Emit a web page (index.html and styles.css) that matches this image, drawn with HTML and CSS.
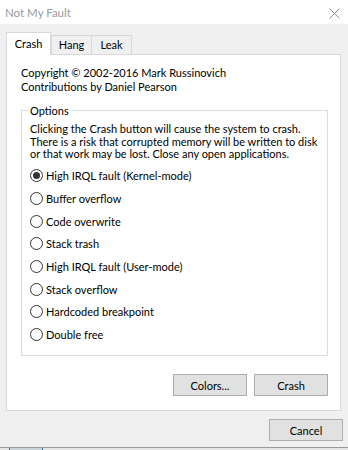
FILE: index.html
```html
<!DOCTYPE html>
<html lang="en">

<head>
    <meta charset="UTF-8">
    <title>Not My Fault</title>
    <link rel="stylesheet" href="styles.css">
</head>

<body>
    <div class="window">
        <div class="titlebar">
            <span class="title">Not My Fault</span>
            <svg class="close" width="11" height="11" viewBox="0 0 11 11">
                <path d="M0.5 0.5 L10.5 10.5 M10.5 0.5 L0.5 10.5" stroke="#8c8c8c" stroke-width="1" fill="none"/>
            </svg>
        </div>

        <div class="client">
            <div class="tabs">
                <div class="tab active">Crash</div>
                <div class="tab">Hang</div>
                <div class="tab">Leak</div>
            </div>

            <div class="panel">
                <p class="copy">Copyright © 2002-2016 Mark Russinovich<br>Contributions by Daniel Pearson</p>

                <fieldset class="options">
                    <legend>Options</legend>
                    <p class="desc">Clicking the Crash button will cause the system to crash.<br>There is a risk that corrupted memory will be written to disk<br>or that work may be lost. Close any open applications.</p>
                    <div class="radios">
                        <label class="radio"><span class="dot checked"></span>High IRQL fault (Kernel-mode)</label>
                        <label class="radio"><span class="dot"></span>Buffer overflow</label>
                        <label class="radio"><span class="dot"></span>Code overwrite</label>
                        <label class="radio"><span class="dot"></span>Stack trash</label>
                        <label class="radio"><span class="dot"></span>High IRQL fault (User-mode)</label>
                        <label class="radio"><span class="dot"></span>Stack overflow</label>
                        <label class="radio"><span class="dot"></span>Hardcoded breakpoint</label>
                        <label class="radio"><span class="dot"></span>Double free</label>
                    </div>
                </fieldset>

                <div class="actions">
                    <button>Colors...</button>
                    <button>Crash</button>
                </div>
            </div>

            <div class="footer">
                <button>Cancel</button>
            </div>
        </div>
    </div>

    <div class="desktop">
        <span class="taskitem"></span>
    </div>
</body>

</html>
```

FILE: styles.css
```css
body {
    margin: 0;
    width: 348px;
    height: 450px;
    overflow: hidden;
    font-family: "Lato", "Noto Sans", sans-serif;
    font-size: 11px;
    color: #000;
    background-color: #e4e4e4;
}

.window {
    height: 448px;
    display: flex;
    flex-direction: column;
    border-bottom: 1px solid #9a9a9a;
    box-sizing: border-box;
}

.titlebar {
    height: 24px;
    flex: none;
    background-color: #fff;
    display: flex;
    align-items: center;
    justify-content: space-between;
    padding: 0 8px 0 5px;
}

.title {
    color: #999;
    font-size: 11.5px;
}

.close {
    display: block;
    margin-top: 2px;
}

.client {
    flex: 1;
    background-color: #f0f0f0;
    padding: 9px 7px 0 6px;
    display: flex;
    flex-direction: column;
}

/* tab strip */
.tabs {
    display: flex;
    align-items: flex-end;
    height: 21px;
    flex: none;
    position: relative;
    z-index: 1;
}

.tab {
    height: 18px;
    line-height: 18px;
    width: 39px;
    text-align: center;
    border: 1px solid #d9d9d9;
    border-bottom: none;
    background-color: #f0f0f0;
}

.tab + .tab {
    margin-left: -1px;
}

.tab.active {
    width: 43px;
    height: 22px;
    line-height: 21px;
    margin-bottom: -1px;
    background-color: #fff;
}

.tab.active + .tab {
    margin-left: 0;
}

.panel {
    flex: none;
    box-sizing: border-box;
    height: 357px;
    background-color: #fff;
    border: 1px solid #d9d9d9;
    padding: 11px 12px 0 14px;
}

.copy {
    margin: 0;
    line-height: 14px;
    white-space: nowrap;
}

.options {
    margin: 9px 0 0 0;
    padding: 0 8px 9px 6px;
    border: 1px solid #dcdcdc;
}

.options legend {
    padding: 0 2px;
    line-height: 15px;
}

.desc {
    margin: 5px 0 0 2px;
    line-height: 12.5px;
    white-space: nowrap;
}

.radios {
    margin-top: 4px;
}

.radio {
    display: flex;
    align-items: center;
    height: 22.7px;
    gap: 3px;
    margin-left: 2px;
    white-space: nowrap;
}

.dot {
    width: 11px;
    height: 11px;
    border: 1px solid #333;
    border-radius: 50%;
    display: flex;
    align-items: center;
    justify-content: center;
}

.dot.checked::after {
    content: "";
    width: 7px;
    height: 7px;
    border-radius: 50%;
    background-color: #333;
}

button {
    font-family: inherit;
    font-size: 11px;
    width: 74px;
    height: 22px;
    padding: 0;
    color: #000;
    background-color: #e1e1e1;
    border: 1px solid #adadad;
}

.actions {
    display: flex;
    justify-content: flex-end;
    gap: 7px;
    margin-top: 18px;
}

.footer {
    display: flex;
    justify-content: flex-end;
    margin: 8px -2px 0 0;
}

.desktop {
    height: 2px;
    padding-left: 9px;
    display: flex;
}

.taskitem {
    width: 32px;
    border-left: 1px solid #3d6f86;
    border-right: 1px solid #3d6f86;
    background-color: #c9d3d8;
}
```
